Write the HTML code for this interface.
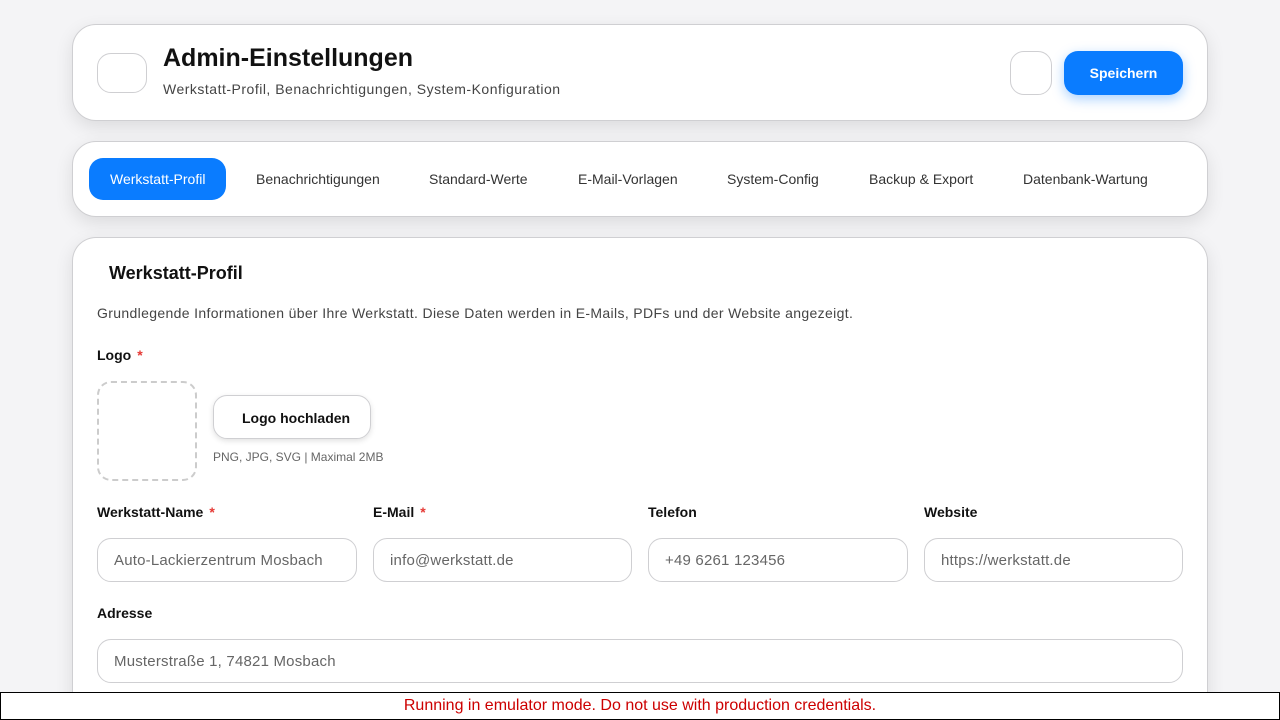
<!DOCTYPE html>
<html><head><meta charset="utf-8"><style>
*{box-sizing:border-box;margin:0;padding:0}
html,body{width:1280px;height:720px;overflow:hidden}
body{background:#f4f4f6;font-family:"Liberation Sans",sans-serif;color:#111;position:relative}
.card{position:absolute;left:72px;width:1136px;background:#fff;border:1px solid #cfcfd2;border-radius:24px;box-shadow:0 6px 18px rgba(0,0,0,.10)}
.h{top:24px;height:97px}
.ib{position:absolute;border:1px solid #cfcfd2;border-radius:14px;background:#fff}
.t{top:141px;height:76px}
.tab{position:absolute;top:179px;font-size:14px;color:#333;transform:translateY(-50%)}
.m{top:237px;height:483px;border-bottom:none;border-bottom-left-radius:0;border-bottom-right-radius:0}
.lbl{position:absolute;font-size:14px;font-weight:bold}
.lbl i{color:#e53935;font-style:normal;margin-left:6px}
.inp{position:absolute;height:44px;border:1px solid #cfcfd2;border-radius:14px;font-size:15px;color:#666;padding:13px 16px 0;letter-spacing:.2px}
</style></head><body>
<div class="card h">
 <div class="ib" style="left:24px;top:28px;width:50px;height:40px"></div>
 <div style="position:absolute;left:90px;top:19px;font-size:25px;font-weight:bold">Admin-Einstellungen</div>
 <div style="position:absolute;left:90px;top:56px;font-size:14px;color:#444;letter-spacing:.5px">Werkstatt-Profil, Benachrichtigungen, System-Konfiguration</div>
 <div class="ib" style="left:937px;top:26px;width:42px;height:44px"></div>
 <div style="position:absolute;left:991px;top:26px;width:119px;height:44px;background:#0a7cff;border-radius:14px;color:#fff;font-weight:bold;font-size:14px;text-align:center;line-height:44px;box-shadow:0 4px 12px rgba(10,124,255,.35)">Speichern</div>
</div>
<div class="card t"></div>
<div style="position:absolute;left:89px;top:158px;width:137px;height:42px;background:#0a7cff;border-radius:14px"></div>
<div class="tab" style="left:110px;color:#fff">Werkstatt-Profil</div>
<div class="tab" style="left:256px">Benachrichtigungen</div>
<div class="tab" style="left:429px">Standard-Werte</div>
<div class="tab" style="left:578px">E-Mail-Vorlagen</div>
<div class="tab" style="left:727px">System-Config</div>
<div class="tab" style="left:869px">Backup &amp; Export</div>
<div class="tab" style="left:1023px">Datenbank-Wartung</div>
<div class="card m"></div>
<div class="lbl" style="left:109px;top:263px;font-size:18px">Werkstatt-Profil</div>
<div style="position:absolute;left:97px;top:305px;font-size:14px;color:#444;letter-spacing:.35px">Grundlegende Informationen über Ihre Werkstatt. Diese Daten werden in E-Mails, PDFs und der Website angezeigt.</div>
<div class="lbl" style="left:97px;top:347px">Logo<i>*</i></div>
<div style="position:absolute;left:97px;top:381px;width:100px;height:100px;border:2px dashed #ccc;border-radius:14px"></div>
<div style="position:absolute;left:213px;top:395px;width:158px;height:44px;border:1px solid #cfcfd2;border-radius:14px;box-shadow:0 2px 6px rgba(0,0,0,.12);font-size:14px;font-weight:bold;line-height:44px;padding-left:28px">Logo hochladen</div>
<div style="position:absolute;left:213px;top:450px;font-size:12px;color:#666">PNG, JPG, SVG | Maximal 2MB</div>
<div class="lbl" style="left:97px;top:504px">Werkstatt-Name<i>*</i></div>
<div class="lbl" style="left:373px;top:504px">E-Mail<i>*</i></div>
<div class="lbl" style="left:648px;top:504px">Telefon</div>
<div class="lbl" style="left:924px;top:504px">Website</div>
<div class="inp" style="left:97px;top:538px;width:260px">Auto-Lackierzentrum Mosbach</div>
<div class="inp" style="left:373px;top:538px;width:259px">info@werkstatt.de</div>
<div class="inp" style="left:648px;top:538px;width:260px">+49 6261 123456</div>
<div class="inp" style="left:924px;top:538px;width:259px">https://werkstatt.de</div>
<div class="lbl" style="left:97px;top:605px">Adresse</div>
<div class="inp" style="left:97px;top:639px;width:1086px">Musterstraße 1, 74821 Mosbach</div>
<div style="position:absolute;left:0;top:692px;width:1280px;height:28px;background:#fff;border:1px solid #000;color:#c00;font-size:16px;text-align:center;line-height:26px">Running in emulator mode. Do not use with production credentials.</div>
</body></html>
